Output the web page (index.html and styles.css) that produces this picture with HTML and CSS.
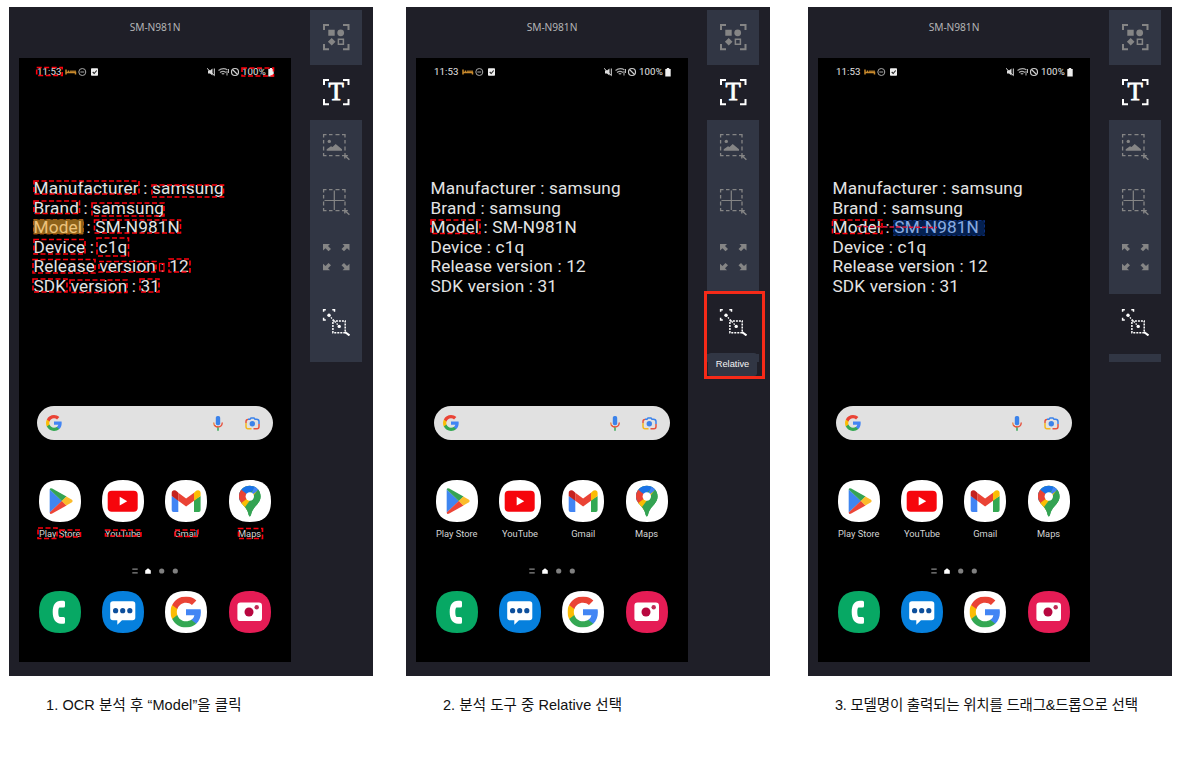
FILE: index.html
```html
<!DOCTYPE html>
<html lang="ko">
<head>
<meta charset="utf-8">
<title>Relative</title>
<link rel="stylesheet" href="styles.css">
</head>
<body>
<svg class="defs" width="0" height="0" aria-hidden="true">
  <symbol id="corners" viewBox="0 0 28 28"><path d="M2 7V2H7M21 2H26.5V7M26.5 21V26.3H21M7 26.3H2V21" fill="none" stroke="currentColor" stroke-width="2"/></symbol>
  <symbol id="t-shapes" viewBox="0 0 28 28"><use href="#corners" width="28" height="28"/><path d="M6.3 6.8h6.4v6H6.3zM9.7 15l3.8 3.8-3.8 3.8-3.8-3.8z" fill="currentColor"/><circle cx="18.7" cy="9.8" r="3.4" fill="currentColor"/><path d="M16.4 16.3h5v5h-5z" fill="none" stroke="currentColor" stroke-width="1.5"/></symbol>
  <symbol id="frame" viewBox="0 0 28 28"><path d="M4.500 1.700H1.600V4.500M20 1.700H23V4.500M23 20V22.700H20M4.500 22.700H1.600V20M7 1.700H10.500M13.500 1.700H17.500M7 22.700H10.500M13.500 22.700H17.500M1.600 7V10.500M1.600 13.500V17.500M23 7V10.500M23 13.500V17.500" fill="none" stroke="currentColor" stroke-width="1.300"/><path d="M22.800 22.600l4.600 4.200M22.800 25.600v-3h3" fill="none" stroke="currentColor" stroke-width="1.400"/></symbol>
  <symbol id="t-image" viewBox="0 0 28 28"><use href="#frame" width="28" height="28"/><circle cx="7.3" cy="8.400" r="1.700" fill="currentColor"/><path d="M4.700 17.700v-1.500l4.300-3 1.500.8 3.200-3 6.300 5.200v1.500z" fill="currentColor"/></symbol>
  <symbol id="t-grid" viewBox="0 0 28 28"><use href="#frame" width="28" height="28"/><path d="M12.300 2.500v19.500M2.500 12.500h20" stroke="currentColor" stroke-width="1.200"/></symbol>
  <symbol id="t-expand" viewBox="0 0 28 28"><path d="M1 1h7L6 3l3 3-2.500 2.300-3-3L1 7.500zM27.500 1h-7l2 2-3 3L22 8.300l3-3 2.500 2.200zM1 27.300h7l-2-2 3-3L6.500 20l-3 3L1 20.800zM27.500 27.300h-7l2-2-3-3L22 20l3 3 2.500-2.200z" fill="currentColor"/></symbol>
  <symbol id="t-relative" viewBox="0 0 28 28"><path d="M1.600 3.800V1.700H3.800M10.300 1.700H12.500V3.800M1.600 9.800V12H3.800" fill="none" stroke="currentColor" stroke-width="1.500"/><circle cx="7" cy="7.300" r="1.700" fill="currentColor"/><path d="M7 7.300L17.200 18.200" stroke="currentColor" stroke-width="1.300" stroke-dasharray="1.500 1.300"/><path d="M10.900 12.900H23.200V24.700H10.900z" fill="none" stroke="currentColor" stroke-width="1.500" stroke-dasharray="2 1"/><circle cx="17.200" cy="18.400" r="1.700" fill="currentColor"/><path d="M23 24l4.500 3.500" stroke="currentColor" stroke-width="2"/></symbol>

  <symbol id="s-left" viewBox="0 0 34 10"><path d="M1 2.500v5M1 5.600h9.500V7.500M3.500 3.500v2M6 3.500v2M8 3.500v2M10 3.500v2" stroke="#c98a2c" stroke-width="1.500" fill="none"/><circle cx="17.300" cy="5" r="3.500" fill="none" stroke="#aaa"/><path d="M15.400 5h3.800" stroke="#aaa"/><rect x="26" y="1.300" width="7" height="7.500" rx=".8" fill="#eee"/><path d="M27.700 5l1.500 1.500 2.500-3" fill="none" stroke="#222" stroke-width="1.100"/></symbol>
  <symbol id="s-right" viewBox="0 0 34 10"><path d="M1 3.500h2l2.500-2V8.500L3 6.500H1z" fill="#ddd"/><path d="M0 1.300l7.500 7.400M7.300 1.500v7" stroke="#ddd" fill="none"/><path d="M11.500 3.500Q16 .2 20.500 3M13 5.500Q16 3.300 19 5.500M14.700 7Q16 6.200 17.300 7" stroke="#aaa" stroke-width="1.200" fill="none"/><path d="M20 8.500V4M21.500 2v4" stroke="#bbb" stroke-width="1"/><circle cx="28" cy="5" r="3.500" fill="none" stroke="#ccc" stroke-width="1.200"/><path d="M25.500 2.500l5 5" stroke="#ccc" stroke-width="1.200"/></symbol>
  <symbol id="s-batt" viewBox="0 0 6 9"><path d="M1.800 0h2.400v1H5.700V8.500H.3V1H1.800z" fill="#eee"/></symbol>

  <symbol id="g" viewBox="1 1 22 22"><path fill="#4285f4" d="M22.560 12.250c0-.78-.07-1.530-.2-2.250H12v4.260h5.920c-.26 1.370-1.040 2.530-2.210 3.310v2.770h3.570c2.080-1.920 3.280-4.740 3.280-8.090z"/><path fill="#34a853" d="M12 23c2.970 0 5.460-.98 7.280-2.660l-3.570-2.770c-.98.66-2.230 1.060-3.710 1.060-2.860 0-5.290-1.930-6.160-4.530H2.180v2.840C3.990 20.530 7.700 23 12 23z"/><path fill="#fbbc05" d="M5.840 14.090c-.22-.66-.35-1.360-.35-2.090s.13-1.430.35-2.090V7.070H2.180C1.430 8.550 1 10.220 1 12s.43 3.450 1.180 4.930l3.660-2.840z"/><path fill="#ea4335" d="M12 5.380c1.620 0 3.060.56 4.210 1.640l3.150-3.150C17.450 2.090 14.970 1 12 1 7.700 1 3.990 3.470 2.180 7.070l3.660 2.840c.87-2.600 3.300-4.530 6.160-4.530z"/></symbol>
  <symbol id="mic" viewBox="0 0 10 15"><rect x="2.800" y="0" width="4.400" height="9.300" rx="1.800" fill="#3b82ea"/><path d="M.7 6.500Q1 11 5 11" fill="none" stroke="#f0803a" stroke-width="1.300"/><path d="M1.300 9Q2.500 11 5 11Q9 11 9.300 6.500" fill="none" stroke="#e5533f" stroke-width="1.400"/><path d="M5 11.500v3.200" stroke="#34a853" stroke-width="1.500"/></symbol>
  <symbol id="lens" viewBox="0 0 15 13"><path d="M1 6V4.500Q1 2.500 3 2.500" fill="none" stroke="#e5533f" stroke-width="1.500"/><path d="M3 2.200H5L6 1H9L10 2.200H11.500Q14 2.200 14 4.500V7" fill="none" stroke="#3b82ea" stroke-width="1.500"/><path d="M1 6V9.500Q1 11.800 3 11.800H6.500" fill="none" stroke="#f4b81f" stroke-width="1.500"/><path d="M14 7v2.500Q14 11.800 12 11.800H8.500" fill="none" stroke="#e5533f" stroke-width="1.500"/><circle cx="7.300" cy="6.800" r="2.700" fill="#3b82ea"/></symbol>

  <symbol id="tile" viewBox="0 0 42 42"><path d="M21 0C35 0 42 6.500 42 21S35 42 21 42 0 35.500 0 21 7 0 21 0Z" fill="currentColor"/></symbol>
  <symbol id="a-play" viewBox="0 0 42 42"><path d="M10.700 9.500V32.500L23 21z" fill="#3f86f0"/><path d="M10.700 9.500Q11 7.600 13.200 8.600L27.500 16.500 23 21.300z" fill="#35a353"/><path d="M10.700 32.500Q11 34.800 13.200 33.600L27.500 25.500 23 20.700z" fill="#ec4537"/><path d="M27.300 16.400L33 19.700Q34.500 21 33 22.300L27.300 25.600 22.700 21z" fill="#fbbc2b"/></symbol>
  <symbol id="a-yt" viewBox="0 0 42 42"><rect x="5.700" y="10.700" width="30" height="21" rx="4" fill="#f6050c"/><path d="M17.700 16.800V25.600L25.200 21.200z" fill="#fff"/></symbol>
  <symbol id="a-gmail" viewBox="0 0 42 42"><path d="M6.700 16L13.300 20V32H8.500Q6.700 32 6.700 30z" fill="#4285f4"/><path d="M35.600 16L29 20V32H33.800Q35.600 32 35.600 30z" fill="#34a853"/><path d="M13.300 12.700L21.100 18.600 29 12.700V20.700L21.100 26.600 13.300 20.700z" fill="#ea4335"/><path d="M6.700 13C6.700 9.800 10 9.300 12 11.500L13.300 12.700V20.700L6.700 16z" fill="#c5221f"/><path d="M35.600 13C35.600 9.800 32.300 9.300 30.300 11.500L29 12.700V20.700L35.600 16z" fill="#fbbc04"/></symbol>
  <symbol id="a-maps" viewBox="0 0 42 42"><clipPath id="pin"><path d="M20.800 5.700C14.800 5.700 10 10.400 10 16.500C10 24 18.500 26.500 19.500 34.500Q20.800 38.500 22.100 34.500C23.500 26.500 31.600 24 31.600 16.500C31.600 10.400 26.800 5.700 20.800 5.700Z"/></clipPath><g clip-path="url(#pin)"><path d="M8 4h26v35H8z" fill="#34a353"/><path d="M8 24L33 2H8z" fill="#1a73e8"/><path d="M27 4L20.800 16.500 34 10V4z" fill="#4285f4"/><path d="M6 5L20.800 16.500 10 27z" fill="#ea4335"/><path d="M20.800 16.500L29 10.500 18 31 11 24z" fill="#fbbc04"/><path d="M31 7L16 27 20 38 36 30z" fill="#34a353"/></g><circle cx="20.800" cy="16.500" r="4.200" fill="#fff"/></symbol>
  <symbol id="a-phone" viewBox="0 0 42 42"><path d="M24.500 9.800H22C16.500 9.800 13.700 14 13.700 21S16.500 32.700 22 32.700H24.500Q26 32.700 26 31.200V27.500Q26 26 24.500 26H21Q19.300 26 19.300 21T21 16.500H24.500Q26 16.500 26 15V11.300Q26 9.800 24.500 9.800Z" fill="#fff"/></symbol>
  <symbol id="a-msg" viewBox="0 0 42 42"><path d="M11 10.200H30.500Q33.300 10.200 33.300 13V26.500Q33.300 29.300 30.500 29.300H20L15.300 33.700V29.300H11Q8.200 29.300 8.200 26.500V13Q8.200 10.200 11 10.200Z" fill="#fff"/><g fill="#0d4f9c"><circle cx="13.600" cy="19.700" r="2.600"/><circle cx="20.700" cy="19.700" r="2.600"/><circle cx="27.800" cy="19.700" r="2.600"/></g></symbol>
  <symbol id="a-cam" viewBox="0 0 42 42"><rect x="8.400" y="11.500" width="24.600" height="18.600" rx="3.200" fill="#fff"/><circle cx="20" cy="21" r="4.500" fill="#b8063f"/><circle cx="27.700" cy="16.300" r="2.200" fill="#c02a55"/></symbol>
  <symbol id="pager" viewBox="0 0 46 8"><path d="M.3 2.200h5.400M.3 5.800h5.400" stroke="#888" stroke-width="1.200"/><path d="M16 1.200L18.800 3.500V6.700H13.200V3.500z" fill="#fff"/><circle cx="29.700" cy="4" r="2.600" fill="#808080"/><circle cx="43.300" cy="4" r="2.600" fill="#808080"/></symbol>
</svg>

<main class="steps">
  <figure class="step">
    <div class="panel">
      <div class="stage">
        <h2 class="device">SM-N981N</h2>
        <div class="screen">
          <div class="status"><span class="time">11:53</span><svg class="st"><use href="#s-left"/></svg><svg class="st push"><use href="#s-right"/></svg><span class="pct">100%</span><svg class="batt"><use href="#s-batt"/></svg></div>
          <ul class="specs"><li>Manufacturer : samsung</li><li>Brand : samsung</li><li>Model : SM-N981N</li><li>Device : c1q</li><li>Release version : 12</li><li>SDK version : 31</li></ul>
          <div class="search"><svg class="g"><use href="#g"/></svg><svg class="mic"><use href="#mic"/></svg><svg class="lens"><use href="#lens"/></svg></div>
          <div class="apps">
            <div class="app"><svg><use href="#tile"/><use href="#a-play"/></svg><span>Play Store</span></div>
            <div class="app"><svg><use href="#tile"/><use href="#a-yt"/></svg><span>YouTube</span></div>
            <div class="app"><svg><use href="#tile"/><use href="#a-gmail"/></svg><span>Gmail</span></div>
            <div class="app"><svg><use href="#tile"/><use href="#a-maps"/></svg><span>Maps</span></div>
          </div>
          <svg class="pager"><use href="#pager"/></svg>
          <div class="apps dock">
            <div class="app green"><svg><use href="#tile"/><use href="#a-phone"/></svg></div>
            <div class="app blue"><svg><use href="#tile"/><use href="#a-msg"/></svg></div>
            <div class="app"><svg><use href="#tile"/><use href="#g" x="5.500" y="5.500" width="31" height="31"/></svg></div>
            <div class="app pink"><svg><use href="#tile"/><use href="#a-cam"/></svg></div>
          </div>
        </div>
      </div>
      <nav class="tools">
        <span class="tool"><svg><use href="#t-shapes"/></svg></span>
        <span class="tool active"><svg><use href="#corners"/><text x="14.200" y="21.800" class="tee" text-anchor="middle">T</text></svg></span>
        <span class="tool"><svg><use href="#t-image"/></svg></span>
        <span class="tool"><svg><use href="#t-grid"/></svg></span>
        <span class="tool expand"><svg><use href="#t-expand"/></svg></span>
        <span class="tool relative lit"><svg><use href="#t-relative"/></svg></span>
        <span class="tail"></span>
      </nav>
      <svg class="marks" viewBox="9 7 364 669">
        <rect class="pick" x="33.500" y="219.500" width="50" height="14.500"/>
        <g class="ocr">
          <rect x="36.700" y="67.500" width="25.500" height="8"/><rect x="242" y="68" width="31.500" height="8"/>
          <rect x="34" y="181" width="105" height="13"/><rect x="152" y="185" width="71.500" height="12"/>
          <rect x="34" y="201" width="45.500" height="12.500"/><rect x="92" y="203" width="72" height="13"/>
          <rect x="94.500" y="220" width="86" height="13"/>
          <rect x="34" y="239.500" width="51" height="14.500"/><rect x="97" y="238" width="31.500" height="18"/>
          <rect x="33" y="259.500" width="62" height="13.500"/><rect x="99" y="261.500" width="57" height="10.500"/><rect class="solid" x="159.500" y="263.500" width="4.500" height="7.500"/><rect x="169" y="259" width="21" height="13"/>
          <rect x="33" y="279" width="34" height="13"/><rect x="70" y="280" width="57" height="12.500"/><rect x="140" y="279" width="19" height="13"/>
          <rect x="38" y="528" width="19" height="10.500"/><rect x="60" y="530" width="20.500" height="7"/><rect x="105.500" y="530" width="35.500" height="6"/><rect x="175" y="530" width="23" height="6.500"/><rect x="238.500" y="528.500" width="24" height="10"/>
        </g>
      </svg>
    </div>
    <figcaption class="cap one">1. OCR 분석 후 “Model”을 클릭</figcaption>
  </figure>

  <figure class="step">
    <div class="panel">
      <div class="stage">
        <h2 class="device">SM-N981N</h2>
        <div class="screen">
          <div class="status"><span class="time">11:53</span><svg class="st"><use href="#s-left"/></svg><svg class="st push"><use href="#s-right"/></svg><span class="pct">100%</span><svg class="batt"><use href="#s-batt"/></svg></div>
          <ul class="specs"><li>Manufacturer : samsung</li><li>Brand : samsung</li><li>Model : SM-N981N</li><li>Device : c1q</li><li>Release version : 12</li><li>SDK version : 31</li></ul>
          <div class="search"><svg class="g"><use href="#g"/></svg><svg class="mic"><use href="#mic"/></svg><svg class="lens"><use href="#lens"/></svg></div>
          <div class="apps">
            <div class="app"><svg><use href="#tile"/><use href="#a-play"/></svg><span>Play Store</span></div>
            <div class="app"><svg><use href="#tile"/><use href="#a-yt"/></svg><span>YouTube</span></div>
            <div class="app"><svg><use href="#tile"/><use href="#a-gmail"/></svg><span>Gmail</span></div>
            <div class="app"><svg><use href="#tile"/><use href="#a-maps"/></svg><span>Maps</span></div>
          </div>
          <svg class="pager"><use href="#pager"/></svg>
          <div class="apps dock">
            <div class="app green"><svg><use href="#tile"/><use href="#a-phone"/></svg></div>
            <div class="app blue"><svg><use href="#tile"/><use href="#a-msg"/></svg></div>
            <div class="app"><svg><use href="#tile"/><use href="#g" x="5.500" y="5.500" width="31" height="31"/></svg></div>
            <div class="app pink"><svg><use href="#tile"/><use href="#a-cam"/></svg></div>
          </div>
        </div>
      </div>
      <nav class="tools">
        <span class="tool"><svg><use href="#t-shapes"/></svg></span>
        <span class="tool active"><svg><use href="#corners"/><text x="14.200" y="21.800" class="tee" text-anchor="middle">T</text></svg></span>
        <span class="tool"><svg><use href="#t-image"/></svg></span>
        <span class="tool"><svg><use href="#t-grid"/></svg></span>
        <span class="tool expand"><svg><use href="#t-expand"/></svg></span>
        <span class="tool relative active"><svg><use href="#t-relative"/></svg></span>
        <span class="tail"></span>
      </nav>
      <svg class="marks" viewBox="9 7 364 669"><g class="ocr"><rect x="34" y="220" width="49" height="13.500"/></g></svg>
      <span class="tip">Relative</span>
      <span class="focus"></span>
    </div>
    <figcaption class="cap two">2. 분석 도구 중 Relative 선택</figcaption>
  </figure>

  <figure class="step">
    <div class="panel">
      <div class="stage">
        <h2 class="device">SM-N981N</h2>
        <div class="screen">
          <div class="status"><span class="time">11:53</span><svg class="st"><use href="#s-left"/></svg><svg class="st push"><use href="#s-right"/></svg><span class="pct">100%</span><svg class="batt"><use href="#s-batt"/></svg></div>
          <ul class="specs"><li>Manufacturer : samsung</li><li>Brand : samsung</li><li>Model : <span class="found">SM-N981N</span></li><li>Device : c1q</li><li>Release version : 12</li><li>SDK version : 31</li></ul>
          <div class="search"><svg class="g"><use href="#g"/></svg><svg class="mic"><use href="#mic"/></svg><svg class="lens"><use href="#lens"/></svg></div>
          <div class="apps">
            <div class="app"><svg><use href="#tile"/><use href="#a-play"/></svg><span>Play Store</span></div>
            <div class="app"><svg><use href="#tile"/><use href="#a-yt"/></svg><span>YouTube</span></div>
            <div class="app"><svg><use href="#tile"/><use href="#a-gmail"/></svg><span>Gmail</span></div>
            <div class="app"><svg><use href="#tile"/><use href="#a-maps"/></svg><span>Maps</span></div>
          </div>
          <svg class="pager"><use href="#pager"/></svg>
          <div class="apps dock">
            <div class="app green"><svg><use href="#tile"/><use href="#a-phone"/></svg></div>
            <div class="app blue"><svg><use href="#tile"/><use href="#a-msg"/></svg></div>
            <div class="app"><svg><use href="#tile"/><use href="#g" x="5.500" y="5.500" width="31" height="31"/></svg></div>
            <div class="app pink"><svg><use href="#tile"/><use href="#a-cam"/></svg></div>
          </div>
        </div>
      </div>
      <nav class="tools">
        <span class="tool"><svg><use href="#t-shapes"/></svg></span>
        <span class="tool active"><svg><use href="#corners"/><text x="14.200" y="21.800" class="tee" text-anchor="middle">T</text></svg></span>
        <span class="tool"><svg><use href="#t-image"/></svg></span>
        <span class="tool"><svg><use href="#t-grid"/></svg></span>
        <span class="tool expand"><svg><use href="#t-expand"/></svg></span>
        <span class="tool relative active"><svg><use href="#t-relative"/></svg></span>
        <span class="tail"></span>
      </nav>
      <svg class="marks" viewBox="9 7 364 669"><g class="ocr"><rect x="33.500" y="220" width="49.500" height="13.500"/></g><rect class="drag" x="94.500" y="220.500" width="91" height="15"/><path class="link" d="M58 226.500L138 227.500"/></svg>
    </div>
    <figcaption class="cap three">3. 모델명이 출력되는 위치를 드래그&amp;드롭으로 선택</figcaption>
  </figure>
</main>
</body>
</html>
```
FILE: styles.css
```css
* { box-sizing: border-box; }
body { margin: 0; background: #fff; width: 1183px; height: 765px; overflow: hidden; }
svg { display: block; flex: none; }
.defs { position: absolute; }
.steps { display: grid; grid-template-columns: 364px 364px 364px; column-gap: 33px; padding: 7px 0 0 9px; }
.step { margin: 0; }
.step:last-child { margin-left: 5px; margin-right: -5px; }
.panel { position: relative; display: flex; width: 364px; height: 669px; padding-left: 10px; background: #1f1f28; }
.stage { width: 272px; }
.device { margin: 0; height: 51px; padding-top: 12px; text-align: center; font: 400 10.200px/16px "Noto Sans", sans-serif; letter-spacing: -.05px; color: #b4b4b6; }
.screen { height: 604px; background: #000; font-family: Roboto, sans-serif; color: #e4e4e4; }
.status { display: flex; align-items: center; height: 28px; padding: 0 17px 0 18px; font-size: 9.700px; line-height: 12px; }
.time { width: 28px; letter-spacing: .1px; white-space: nowrap; }
.st { width: 34px; height: 10px; }
.push { margin-left: auto; }
.pct { width: 26px; margin-left: 1px; letter-spacing: .1px; }
.batt { width: 6px; height: 9px; }
.specs { list-style: none; margin: 0; padding: 93px 0 0 14.500px; height: 320px; font-size: 17.200px; line-height: 19.600px; letter-spacing: .16px; white-space: nowrap; }
.found { color: #e4f0ff; }
.search { display: flex; align-items: center; width: 235.500px; height: 34px; margin-left: 18.200px; padding: 0 12.500px 0 9px; border-radius: 17px; background: #e1e1e1; }
.search .g { width: 16px; height: 16px; }
.search .mic { width: 10px; height: 15px; margin-left: auto; }
.search .lens { width: 15px; height: 13px; margin-left: 22px; }
.apps { display: grid; grid-template-columns: repeat(4, 42px); column-gap: 21.300px; margin: 40px 0 0 19.700px; height: 87px; align-items: start; }
.app { display: flex; flex-direction: column; align-items: center; color: #fff; }
.app svg { width: 42px; height: 42px; }
.app span { margin-top: 5px; font-size: 9.300px; line-height: 13px; color: #d4d4d4; white-space: nowrap; }
.pager { width: 46px; height: 8px; margin-left: 113px; }
.dock { margin-top: 15.500px; height: 42px; }
.green { color: #07a864; }
.blue { color: #0680dd; }
.pink { color: #e51c55; }
.tools { width: 52px; margin: 3px 0 0 19px; }
.tool { display: block; height: 55px; padding: 13px 0 0 12px; background: #313644; color: #858585; }
.tool svg { width: 28px; height: 28px; }
.tool.expand { height: 64px; }
.tool.relative { height: 60px; padding-top: 14px; }
.tool.active { background: #1f1f28; color: #fff; }
.tool.lit { color: #fff; }
.tail { display: block; height: 8px; background: #313644; }
.tee { font: 400 25px "Liberation Serif", serif; fill: currentColor; stroke: currentColor; stroke-width: .8; }
.marks { position: absolute; left: 0; top: 0; width: 364px; height: 669px; }
.ocr rect { fill: none; stroke: #ff000c; stroke-width: 1.600; stroke-dasharray: 5 2.500; }
.ocr .solid { stroke-dasharray: none; stroke-width: 1.200; }
.pick { fill: rgba(244, 170, 44, .58); stroke: #c8600c; stroke-dasharray: 4 2.500; stroke-width: .8; }
.drag { fill: rgba(10, 76, 190, .42); stroke: #0a2f80; stroke-dasharray: 3 2; }
.link { stroke: #e0173a; stroke-width: 1.500; stroke-dasharray: 4.500 2; }
.tip { position: absolute; left: 302px; top: 346px; width: 49px; height: 23px; border-radius: 3px; background: #313644; color: #f4f4f4; font: 9.300px/23px "Liberation Sans", sans-serif; text-align: center; }
.focus { position: absolute; left: 297.500px; top: 283.500px; width: 61px; height: 88px; border: 3px solid #f62a18; }
.cap { margin: 0; padding-top: 19px; font: 14.500px/20px "Liberation Sans", "Noto Sans CJK KR", sans-serif; color: #111; white-space: nowrap; }
.one { padding-left: 37px; letter-spacing: .09px; }
.two { padding-left: 37px; letter-spacing: .05px; }
.three { padding-left: 27px; letter-spacing: -.21px; }
```
